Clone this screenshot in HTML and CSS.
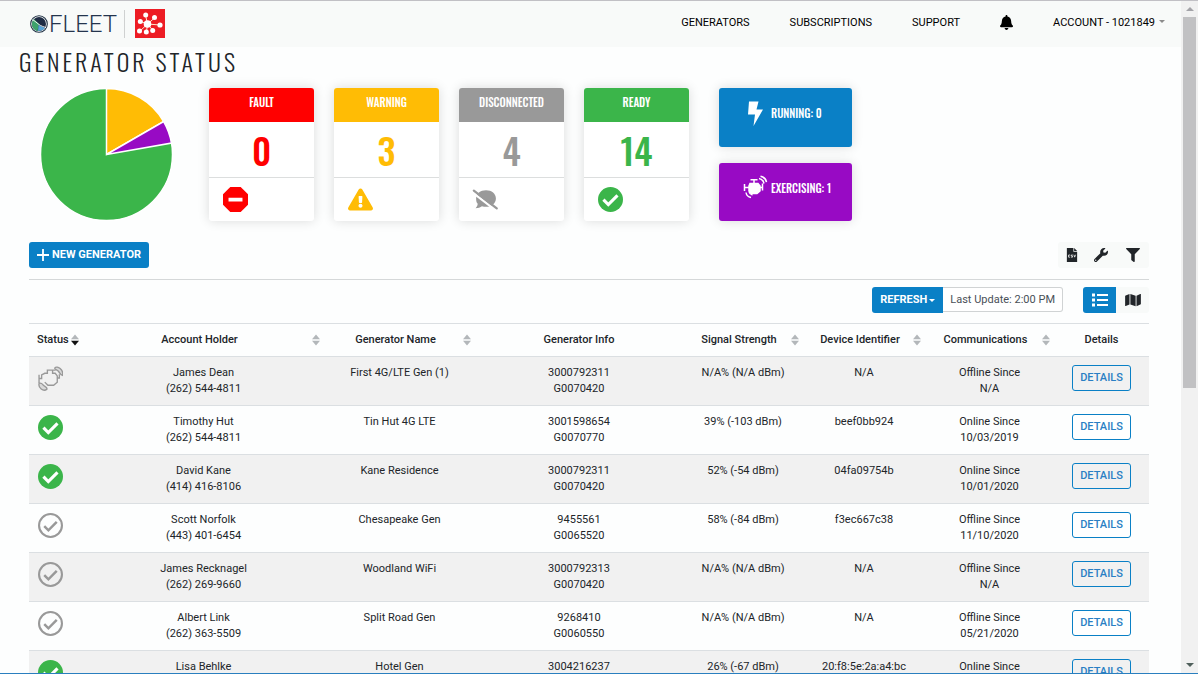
FILE: index.html
```
<!DOCTYPE html>
<html lang="en">
<head>
<meta charset="utf-8">
<title>Fleet - Generator Status</title>
<link rel="stylesheet" href="styles.css">
</head>
<body>
<svg class="defs" aria-hidden="true">
  <symbol id="i-check" viewBox="0 0 24 24"><circle cx="12" cy="12" r="12" fill="#3bb54a"/><path d="M5.2 12.200l4.700 4.700 8.800-8.800" fill="none" stroke="#fff" stroke-width="3"/></symbol>
  <symbol id="i-check-off" viewBox="0 0 24 24"><circle cx="12" cy="12" r="11" fill="none" stroke="#999" stroke-width="2"/><path d="M6 12.600l4 4 8-8" fill="none" stroke="#999" stroke-width="2.400"/></symbol>
  <symbol id="i-engine-off" viewBox="0 0 24 24"><g fill="none" stroke="#999" stroke-width="1.300"><path d="M1 8.500v8M1 12h2.500V8.500L6.500 7H9V4h8M14 4v3h2.500l2 2.500v6l-3.500 3H9.500L6.500 15.500M18.500 11.500h2V8"/><path fill="#d9d9d9" d="M16 2c2.500-3 9 2 7.500 7-1.800-.3-2-1.500-3.500-3.500S16.500 3.800 16 2zM1.200 16.500c2.300-.5 3 .8 4 2s3.500 1.300 3.500 3.500c-3.500 3.500-9-1.500-7.500-5.500z"/></g></symbol>
  <symbol id="i-sort" viewBox="0 0 8 12"><path d="M0 5.300L4 .5l4 4.800zM0 6.800h8l-4 4.800z" fill="#b3b7ba"/></symbol>
  <symbol id="i-sort-desc" viewBox="0 0 8 12"><path d="M0 5.300L4 .5l4 4.800z" fill="#b3b7ba"/><path d="M0 6.800h8l-4 4.800z" fill="#111"/></symbol>
</svg>
<div class="window">
  <div class="page">
    <header class="topbar">
      <a class="brand" href="#" aria-label="Fleet home">
        <svg class="globe" viewBox="0 0 18 18" aria-hidden="true"><circle cx="9" cy="9" r="8.300" fill="#fff" stroke="#1d2f42" stroke-width="1.100"/><circle cx="9" cy="9" r="7" fill="#1e2c44"/><path d="M4 4l5 5-1.500 7C4 15.500 1.800 12 2 9c0-2 .8-4 2-5z" fill="#3da36b"/><path d="M8.500 10l6.500 3c-1.500 2-4 3-7 3z" fill="#58a5d8"/><path d="M2.500 4.500C5 6 7 8 9 9.500S14 12 16 12.500" fill="none" stroke="#fff" stroke-width=".9"/></svg>
        <span class="wordmark">FLEET</span>
        <svg class="hub" viewBox="0 0 30 29" aria-hidden="true"><path fill="#ed1c24" d="M0 0h30v29H0z"/><path d="M12.500 15L10.500 6M12.500 15L20 8.500M12.500 15l12.500 1M12.500 15L18 21.500M12.500 15l-1 8M12.500 15L5 22M12.500 15L5.500 12.500" stroke="#ffe3c9" stroke-width="1"/><g fill="#fff"><circle cx="12.500" cy="15" r="3.800"/><circle cx="10.700" cy="6" r="2.500"/><circle cx="19.500" cy="8.500" r="2.500"/><circle cx="25" cy="16" r="2.600"/><circle cx="17.700" cy="21.500" r="2.500"/><circle cx="11.300" cy="23" r="2.500"/><circle cx="4.500" cy="22" r="2.500"/><circle cx="5.300" cy="12.500" r="2.500"/></g></svg>
      </a>
      <nav class="nav">
        <a href="#">GENERATORS</a>
        <a href="#">SUBSCRIPTIONS</a>
        <a href="#">SUPPORT</a>
        <a class="bell" href="#" aria-label="Notifications"><svg viewBox="0 0 448 512"><path d="M224 512c35.320 0 63.970-28.650 63.970-64H160.030c0 35.350 28.650 64 63.970 64zm215.390-149.710c-19.320-20.760-55.470-51.990-55.470-154.290 0-77.700-54.480-139.900-127.940-155.160V32c0-17.670-14.320-32-31.980-32s-31.980 14.330-31.980 32v20.840C118.560 68.100 64.080 130.300 64.080 208c0 102.300-36.150 133.530-55.470 154.290-6 6.450-8.660 14.160-8.610 21.710.11 16.400 12.980 32 32.100 32h383.800c19.120 0 32-15.600 32.100-32 .05-7.550-2.610-15.270-8.610-21.710z"/></svg></a>
        <a class="account" href="#">ACCOUNT - 1021849<i class="caret"></i></a>
      </nav>
    </header>
    <h1 class="title">GENERATOR STATUS</h1>
    <main class="content">
      <section class="summary">
        <svg class="pie" viewBox="0 0 134 134" role="img" aria-label="Status breakdown"><g stroke="#fff" stroke-width="1.500"><circle cx="67.500" cy="66.500" r="66" fill="#3bb54a"/><path d="M67.500 66.500V.5a66 66 0 0 1 57.160 33z" fill="#ffbc05"/><path d="M67.500 66.500l57.160-33a66 66 0 0 1 7.840 21.540z" fill="#980ac4"/></g></svg>
        <div class="cards">
          <article class="card fault"><h2>FAULT</h2><p>0</p><div class="foot"><svg viewBox="0 0 24 24"><path d="M7 0h10l7 7v10l-7 7H7l-7-7V7z" fill="red"/><path d="M5.300 10.300h13.400v3.600H5.300z" fill="#fff"/></svg></div></article>
          <article class="card warning"><h2>WARNING</h2><p>3</p><div class="foot"><svg viewBox="0 -32 576 576"><path fill="#ffbc05" d="M569.517 440.013C587.975 472.007 564.806 512 527.940 512H48.054c-36.937 0-59.999-40.055-41.577-71.987L246.423 23.985c18.467-32.009 64.720-31.951 83.154 0l239.940 416.028zM288 354c-25.405 0-46 20.595-46 46s20.595 46 46 46 46-20.595 46-46-20.595-46-46-46zm-43.673-165.346l7.418 136c.347 6.364 5.609 11.346 11.982 11.346h48.546c6.373 0 11.635-4.982 11.982-11.346l7.418-136c.375-6.874-5.098-12.654-11.982-12.654h-63.383c-6.884 0-12.356 5.780-11.981 12.654z"/></svg></div></article>
          <article class="card disconnected"><h2>DISCONNECTED</h2><p>4</p><div class="foot"><svg viewBox="0 0 24 24"><path d="M12.500 3c5.500 0 9.500 3.300 9.500 8 0 4.600-4 8-9.500 8-1.400 0-2.700-.2-3.900-.6C7 19.600 5 20.300 2.500 20.300c1.300-1.500 2-2.700 2-4.200C3.200 14.700 3 13 3 11c0-4.700 4-8 9.500-8z" fill="#999"/><path d="M-1.200 4.600L22.800 23.200" stroke="#fff" stroke-width="2.200"/><path d="M.8 3.500l22 17" stroke="#999" stroke-width="2.200" stroke-linecap="round"/></svg></div></article>
          <article class="card ready"><h2>READY</h2><p>14</p><div class="foot"><svg><use href="#i-check"/></svg></div></article>
        </div>
        <div class="tiles">
          <button class="tile running" type="button"><svg viewBox="0 0 25 25"><path d="M6 .5h9.500l-2 8H20L10.500 25l1.500-11.500H5z" fill="#fff"/></svg>RUNNING: 0</button>
          <button class="tile exercising" type="button"><svg viewBox="0 0 25 25"><g fill="none" stroke="#fff" stroke-width="1.500"><path fill="#fff" d="M7 8.500h8l2 2.500v5l-3 2.500H8.500L6 16V11z"/><path d="M11 8V5M7.500 4.700h7M1.500 9v7M1.500 12.500H6M19.500 8.500v7M16 12.500h3.500M16 3.500c3 .5 4.500 2.500 5 5M17.500 1.200c3.500.8 5.500 3 6 6M3 17.500c.5 3 2.500 4.500 5 5M6 16.500c.5 2 1.500 3 3.500 3.500"/></g></svg>EXERCISING: 1</button>
        </div>
      </section>
      <div class="toolbar">
        <button class="btn" type="button"><svg class="plus" viewBox="0 0 12 12"><path d="M6 0v12M0 6h12" stroke="#fff" stroke-width="1.800"/></svg>NEW GENERATOR</button>
        <div class="tools">
          <button type="button" aria-label="Export CSV"><svg viewBox="0 0 12 15"><path d="M.5 0H7.500v4H11.500v11H.5zM8.300 0l3.200 3.200H8.300z" fill="#212529"/><path d="M4 7.500H2.300v2.300H4M6.800 7.500H5.200v1.100h1.400v1.200H5M8 7.200l.9 2.600.9-2.600" fill="none" stroke="#fff" stroke-width=".8"/></svg></button>
          <button type="button" aria-label="Settings"><svg viewBox="0 0 512 512"><path fill="#212529" d="M507.730 109.100c-2.240-9.030-13.540-12.090-20.120-5.510l-74.360 74.360-67.880-11.310-11.310-67.880 74.360-74.360c6.620-6.620 3.430-17.900-5.660-20.160-47.380-11.740-99.550.91-136.580 37.930-39.640 39.640-50.550 97.100-34.050 147.200L18.740 402.760c-24.990 24.990-24.990 65.510 0 90.500 24.990 24.990 65.510 24.990 90.500 0l213.210-213.210c50.120 16.710 107.470 5.680 147.370-34.220 37.070-37.070 49.700-89.320 37.910-136.730zM64 472c-13.250 0-24-10.750-24-24 0-13.260 10.750-24 24-24s24 10.740 24 24c0 13.250-10.750 24-24 24z"/></svg></button>
          <button type="button" aria-label="Filter"><svg viewBox="0 0 512 512"><path fill="#212529" d="M487.976 0H24.028C2.710 0-8.047 25.866 7.058 40.971L192 225.941V432c0 7.831 3.821 15.170 10.237 19.662l80 55.980C298.020 518.690 320 507.493 320 487.980V225.941l184.947-184.970C520.021 25.896 509.338 0 487.976 0z"/></svg></button>
        </div>
      </div>
      <div class="viewbar">
        <div class="refresh"><button class="btn" type="button">REFRESH<i class="caret"></i></button><span>Last Update: 2:00 PM</span></div>
        <div class="views">
          <button class="active" type="button" aria-label="List view"><svg viewBox="0 0 16 14"><path d="M0 2h3M0 7h3M0 12h3" stroke="#fff" stroke-width="3"/><path d="M5 2h11M5 7h11M5 12h11" stroke="#fff" stroke-width="1.800"/></svg></button>
          <button type="button" aria-label="Map view"><svg viewBox="0 0 576 512"><path fill="#212529" d="M0 117.660v346.320c0 11.320 11.430 19.060 21.940 14.860L160 416V32L20.120 87.950A32.006 32.006 0 0 0 0 117.660zM192 416l192 64V96L192 32v384zM554.060 33.160L416 96v384l139.880-55.950A31.996 31.996 0 0 0 576 394.340V48.020c0-11.320-11.430-19.060-21.940-14.860z"/></svg></button>
        </div>
      </div>
      <table class="grid">
        <colgroup><col class="c1"><col class="c2"><col class="c3"><col class="c4"><col class="c5"><col class="c6"><col class="c7"><col class="c8"></colgroup>
        <thead><tr>
          <th class="st"><button type="button"><span>Status</span><svg><use href="#i-sort-desc"/></svg></button></th>
          <th><button type="button"><span>Account Holder</span><svg><use href="#i-sort"/></svg></button></th>
          <th><button type="button"><span>Generator Name</span><svg><use href="#i-sort"/></svg></button></th>
          <th>Generator Info</th>
          <th><button type="button"><span>Signal Strength</span><svg><use href="#i-sort"/></svg></button></th>
          <th><button type="button"><span>Device Identifier</span><svg><use href="#i-sort"/></svg></button></th>
          <th><button type="button"><span>Communications</span><svg><use href="#i-sort"/></svg></button></th>
          <th>Details</th>
        </tr></thead>
        <tbody>
          <tr><td class="st"><svg><use href="#i-engine-off"/></svg></td><td>James Dean<br>(262) 544-4811</td><td>First 4G/LTE Gen (1)</td><td>3000792311<br>G0070420</td><td>N/A% (N/A dBm)</td><td>N/A</td><td>Offline Since<br>N/A</td><td class="act"><button class="details" type="button">DETAILS</button></td></tr>
          <tr><td class="st"><svg><use href="#i-check"/></svg></td><td>Timothy Hut<br>(262) 544-4811</td><td>Tin Hut 4G LTE</td><td>3001598654<br>G0070770</td><td>39% (-103 dBm)</td><td>beef0bb924</td><td>Online Since<br>10/03/2019</td><td class="act"><button class="details" type="button">DETAILS</button></td></tr>
          <tr><td class="st"><svg><use href="#i-check"/></svg></td><td>David Kane<br>(414) 416-8106</td><td>Kane Residence</td><td>3000792311<br>G0070420</td><td>52% (-54 dBm)</td><td>04fa09754b</td><td>Online Since<br>10/01/2020</td><td class="act"><button class="details" type="button">DETAILS</button></td></tr>
          <tr><td class="st"><svg><use href="#i-check-off"/></svg></td><td>Scott Norfolk<br>(443) 401-6454</td><td>Chesapeake Gen</td><td>9455561<br>G0065520</td><td>58% (-84 dBm)</td><td>f3ec667c38</td><td>Offline Since<br>11/10/2020</td><td class="act"><button class="details" type="button">DETAILS</button></td></tr>
          <tr><td class="st"><svg><use href="#i-check-off"/></svg></td><td>James Recknagel<br>(262) 269-9660</td><td>Woodland WiFi</td><td>3000792313<br>G0070420</td><td>N/A% (N/A dBm)</td><td>N/A</td><td>Offline Since<br>N/A</td><td class="act"><button class="details" type="button">DETAILS</button></td></tr>
          <tr><td class="st"><svg><use href="#i-check-off"/></svg></td><td>Albert Link<br>(262) 363-5509</td><td>Split Road Gen</td><td>9268410<br>G0060550</td><td>N/A% (N/A dBm)</td><td>N/A</td><td>Offline Since<br>05/21/2020</td><td class="act"><button class="details" type="button">DETAILS</button></td></tr>
          <tr><td class="st"><svg><use href="#i-check"/></svg></td><td>Lisa Behlke</td><td>Hotel Gen</td><td>3004216237</td><td>26% (-67 dBm)</td><td>20:f8:5e:2a:a4:bc</td><td>Online Since</td><td class="act"><button class="details" type="button">DETAILS</button></td></tr>
        </tbody>
      </table>
    </main>
  </div>
  <div class="scrollbar" aria-hidden="true"><i class="up"></i><div class="track"><div class="thumb"></div></div><i class="dn"></i></div>
</div>
</body>
</html>
```
FILE: styles.css
```
* { box-sizing: border-box; }
body { margin: 0; font: 11px/16px Roboto, "Liberation Sans", sans-serif; color: #212529; background: #fdfefe; }
button { font: inherit; color: inherit; border: 0; background: none; padding: 0; cursor: pointer; }
a { color: inherit; text-decoration: none; }
svg { display: block; overflow: visible; }
.defs { position: absolute; width: 0; height: 0; }

.window { display: flex; height: 100vh; overflow: hidden; border-top: 1px solid #c1c0c5; border-bottom: 1px solid #2a7fbf; }
.page { flex: 1; min-width: 0; overflow: hidden; }

.topbar { display: flex; justify-content: space-between; height: 46px; padding: 0 16px 0 30px; background: #f8faf9; }
.brand { display: flex; align-items: center; padding-bottom: 1px; }
.globe { width: 18px; height: 18px; }
.wordmark { margin-left: 1px; padding-right: 7px; border-right: 1px solid #cfd1d1; font: 300 24px/28px Roboto, sans-serif; color: #24344d; }
.hub { width: 30px; height: 29px; margin-left: 10px; }
.nav { display: flex; align-items: center; padding-bottom: 3px; gap: 40px; color: #000; }
.bell svg { width: 13px; height: 15px; }
.caret { display: inline-block; margin-left: 4px; vertical-align: 3px; border: 3px solid transparent; border-top-color: currentColor; border-bottom: 0; }
.account .caret { color: #8b8b8b; }

.title { margin: 0; padding-left: 19px; font: 300 24px/28px Oswald, "Liberation Sans Narrow", "Liberation Sans", sans-serif; letter-spacing: 3px; }
.content { padding: 13px 32px 0 29px; }

.summary { display: flex; height: 133px; }
.pie { width: 134px; height: 134px; margin: 0 36px 0 10px; }
.cards { display: flex; gap: 20px; }
.card { display: flex; flex-direction: column; width: 105px; border-radius: 3px; overflow: hidden; background: #fff; box-shadow: 0 0 12px rgba(0, 0, 0, .14); text-align: center; }
.card h2, .card p, .tile { font-family: Oswald, "Liberation Sans Narrow", "Liberation Sans", sans-serif; }
.card h2 { margin: 0; height: 34px; font-size: 11px; line-height: 28px; font-weight: 500; color: #fff; }
.card p { flex: 1; margin: 0; font-size: 36px; line-height: 55px; font-weight: 500; }
.foot { height: 44px; padding: 9px 14px; border-top: 1px solid #dcdede; }
.foot svg { width: 25px; height: 25px; }
.fault h2 { background: #f00; }
.fault p { color: #f00; }
.warning h2 { background: #ffbc05; }
.warning p { color: #ffbc05; }
.disconnected h2 { background: #999; }
.disconnected p { color: #999; }
.ready h2 { background: #3bb54a; }
.ready p { color: #3bb54a; }
.tiles { display: flex; flex-direction: column; gap: 16px; margin-left: 30px; }
.tile { flex: 1; display: flex; align-items: center; gap: 3px; width: 133px; padding: 0 0 8px 24px; border-radius: 3px; color: #fff; font-size: 11px; font-weight: 500; box-shadow: 0 0 12px rgba(0, 0, 0, .14); }
.tile svg { width: 25px; height: 25px; }
.running { background: #0a80c6; }
.exercising { background: #980ac4; }

.toolbar { display: flex; justify-content: space-between; margin-top: 21px; padding-bottom: 11px; border-bottom: 1px solid #d5d8d9; }
.btn { display: flex; align-items: center; height: 26px; padding: 0 8px; border-radius: 3px; background: #0a80c6; color: #fff; font-weight: 700; }
.plus { width: 12px; height: 12px; margin-right: 3px; }
.tools, .views { display: flex; border-radius: 3px; background: #f8faf9; }
.tools button { width: 31px; height: 25px; display: grid; place-items: center; }
.tools button:first-child { width: 27px; }
.tools button:last-child { width: 33px; }
.tools svg { width: 14px; height: 14px; }
.viewbar { display: flex; justify-content: flex-end; gap: 20px; padding: 7px 0 10px; }
.refresh { display: flex; }
.refresh .btn { border-radius: 3px 0 0 3px; }
.refresh .caret { margin-left: 2px; }
.refresh span { height: 25px; padding: 0 7px; border: 1px solid #d0d3d4; border-left: 0; border-radius: 0 3px 3px 0; line-height: 23px; color: #495057; background: #fff; }
.views button { display: grid; place-items: center; width: 33px; height: 25px; }
.views .active { height: 26px; background: #0a80c6; border-radius: 3px 0 0 3px; }
.views svg { width: 16px; height: 14px; }

.grid { width: 100%; table-layout: fixed; border-collapse: separate; border-spacing: 0; text-align: center; }
.c1 { width: 54px; }
.c2 { width: 241px; }
.c3 { width: 151px; }
.c4 { width: 208px; }
.c5 { width: 120px; }
.c6 { width: 122px; }
.c7 { width: 129px; }
.c8 { width: 95px; }
.grid th { height: 33px; padding: 0 4px; border-top: 1px solid #dbdfe2; font-weight: 500; vertical-align: middle; }
.grid th button { display: flex; align-items: center; width: 100%; font-weight: 500; white-space: nowrap; }
.grid th span { flex: 1; }
.grid th svg { width: 8px; height: 12px; }
.grid th.st { padding-left: 8px; }
.grid th.st span { text-align: left; }
.grid td { height: 49px; padding: 8px 4px 7px; border-top: 1px solid #dbdfe2; vertical-align: top; }
.grid tbody tr:nth-child(odd) { background: #f1f1f1; }
.grid td.st { padding-left: 9px; }
.grid td.st svg { width: 25px; height: 25px; margin-top: 1px; }
.details { width: 59px; height: 26px; border: 1px solid #0a80c6; border-radius: 3px; background: #fff; color: #2a7fc4; font-weight: 500; }
.grid tbody tr:nth-child(odd) .details { background: transparent; }

.scrollbar { display: flex; flex-direction: column; align-items: center; width: 17px; padding: 6px 0; background: #f1f1f1; }
.scrollbar .up, .scrollbar .dn { border: 4px solid transparent; }
.scrollbar .up { border-top: 0; border-bottom-color: #a3a3a8; }
.scrollbar .dn { border-bottom: 0; border-top-color: #50605c; }
.track { flex: 1; width: 13px; margin: 6px 0; }
.thumb { height: 58%; background: #c1c1c3; }
```
